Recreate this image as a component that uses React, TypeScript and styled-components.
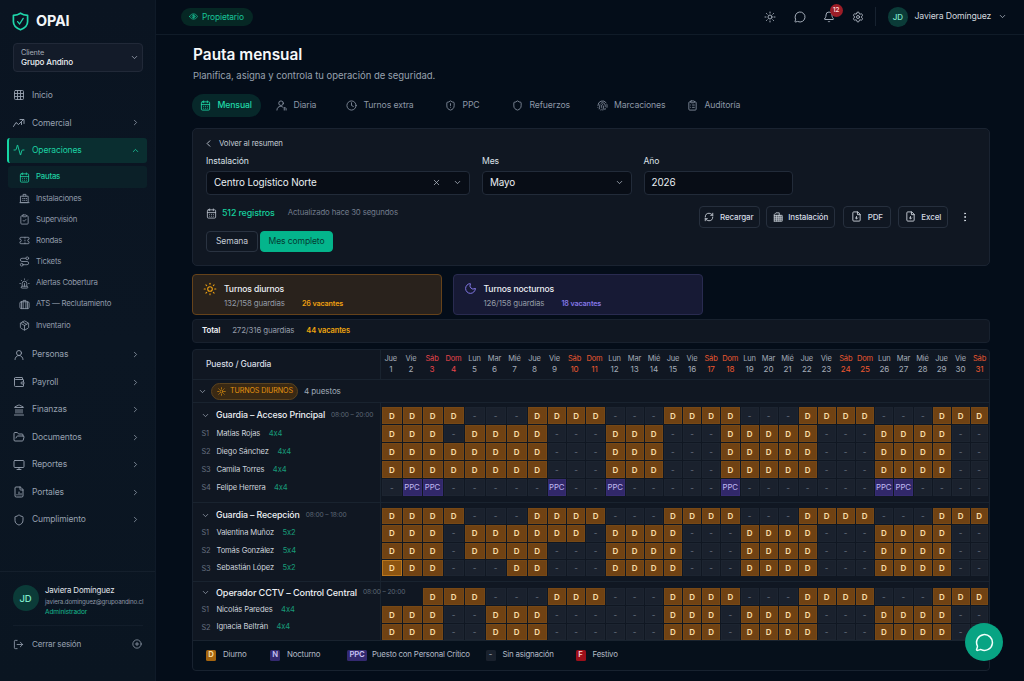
import { ReactNode } from 'react';
import styled, { createGlobalStyle, css } from 'styled-components';
import {
  Activity,
  Bell,
  CalendarDays,
  ChevronDown,
  ChevronLeft,
  ChevronRight,
  ChevronUp,
  CirclePlus,
  ClipboardCheck,
  ClipboardList,
  Clock,
  EllipsisVertical,
  FileChartColumn,
  Fingerprint,
  FolderOpen,
  Grid3x3,
  Landmark,
  LogOut,
  MessageCircle,
  Monitor,
  Moon,
  Package,
  RefreshCw,
  Route,
  Settings,
  Shield,
  ShieldAlert,
  Siren,
  Sun,
  Ticket,
  UserRound,
  Wallet,
  X,
} from 'lucide-react';

const GlobalStyle = createGlobalStyle`
  * {
    box-sizing: border-box;
  }

  body {
    margin: 0;
    background: #040d19;
    color: #e6eaf0;
    font-family: Inter, 'Liberation Sans', sans-serif;
    font-size: 9px;
    font-feature-settings: 'calt' 0;
    letter-spacing: -0.13px;
    line-height: 1;
    overflow: hidden;
  }

  svg {
    flex: none;
    display: block;
  }
`;

const Layout = styled.div`
  display: flex;
  width: 1024px;
  height: 681px;
`;

/* ---------- Sidebar ---------- */

const Sidebar = styled.aside`
  display: flex;
  flex-direction: column;
  width: 156px;
  flex: none;
  background: linear-gradient(180deg, #0a1421, #0b1623 50%, #0a1521);
  border-right: 1px solid #0f1a28;
`;

const Brand = styled.div`
  display: flex;
  align-items: center;
  gap: 7px;
  height: 43px;
  padding-left: 12px;
  color: #f2f5f8;
  font-size: 14.4px;
  font-weight: 700;
`;

const ClientSelect = styled.div`
  display: flex;
  align-items: center;
  justify-content: space-between;
  width: 130.5px;
  height: 29px;
  margin: 0 0 9.5px 12.5px;
  padding: 0 3px 0 7.5px;
  border: 1px solid #212938;
  border-radius: 4px;
  background: #131b29;
  color: #aab2c0;
`;

const ClientText = styled.div`
  display: flex;
  flex-direction: column;
  gap: 2px;
  font-size: 7.3px;
  color: #a3abb8;

  strong {
    color: #eceff3;
    font-size: 8.1px;
    font-weight: 500;
  }
`;

const NavItem = styled.div<{ $active?: boolean }>`
  display: flex;
  align-items: center;
  flex: none;
  height: 27.5px;
  padding: 0 7px 0 13px;
  margin: 0 8px 0 0;
  color: #97a1b0;
  font-size: 8.5px;

  svg:first-child {
    margin-right: 7px;
  }

  svg:nth-of-type(2) {
    margin-left: auto;
  }

  ${({ $active }) =>
    $active &&
    css`
      height: 25.5px;
      margin: 1px 8px 2px 6.5px;
      padding-left: 4.5px;
      border-left: 2px solid #16d6a4;
      border-radius: 3px;
      background: #0a2e30;
      color: #1cd3a3;
    `}
`;

const SubItem = styled.div<{ $active?: boolean }>`
  display: flex;
  align-items: center;
  gap: 6.5px;
  flex: none;
  height: 21.15px;
  margin: 0 8px 0 7.5px;
  padding-left: 11px;
  color: #8f99a8;
  font-size: 7.8px;
  letter-spacing: -0.22px;

  ${({ $active }) =>
    $active &&
    css`
      height: 22px;
      border-radius: 3px;
      background: #0b2028;
      color: #1fcfa0;
      font-weight: 500;
    `}
`;

const SubList = styled.div`
  display: flex;
  flex-direction: column;
  padding-top: 1px;
  margin-bottom: 5px;
`;

const SidebarFooter = styled.div`
  margin-top: auto;
  height: 110px;
  border-top: 1px solid #141f2c;
`;

const UserCard = styled.div`
  display: flex;
  align-items: center;
  gap: 6.5px;
  height: 53.5px;
  margin: 0 12px 0 12.5px;
  border-bottom: 1px solid #121d2a;
`;

const Avatar = styled.div<{ $size: number; $font: number }>`
  display: flex;
  align-items: center;
  justify-content: center;
  flex: none;
  width: ${({ $size }) => $size}px;
  height: ${({ $size }) => $size}px;
  border-radius: 50%;
  background: #0b3b38;
  color: #7fe9cb;
  font-size: ${({ $font }) => $font}px;
  font-weight: 500;
`;

const UserInfo = styled.div`
  display: flex;
  flex-direction: column;
  padding-top: 6px;
  white-space: nowrap;
`;

const UserName = styled.span`
  font-size: 7.9px;
  line-height: 11px;
  color: #e2e6ec;
`;

const UserEmail = styled.span`
  font-size: 6.2px;
  line-height: 11px;
  letter-spacing: -0.16px;
  color: #8d97a6;
`;

const UserRole = styled.span`
  font-size: 6.6px;
  line-height: 11px;
  color: #16b98e;
`;

const Logout = styled.div`
  display: flex;
  align-items: center;
  height: 37px;
  padding: 0 13px 0 13px;
  color: #98a2b1;
  font-size: 8.1px;
  letter-spacing: -0.2px;

  span {
    flex: 1;
    margin-left: 8px;
  }
`;

/* ---------- Main ---------- */

const Main = styled.main`
  flex: 1;
  display: flex;
  flex-direction: column;
  min-width: 0;
`;

const Topbar = styled.header`
  display: flex;
  align-items: center;
  justify-content: space-between;
  height: 34.5px;
  flex: none;
  padding: 0 17px 0 25px;
  border-bottom: 1px solid #101b28;
`;

const RolePill = styled.div`
  display: flex;
  align-items: center;
  gap: 4px;
  width: 71.5px;
  height: 18.5px;
  padding-left: 8px;
  border-radius: 10px;
  background: #062724;
  color: #18c598;
  font-size: 8.4px;
`;

const TopActions = styled.div`
  display: flex;
  align-items: center;
  color: #b3bbc7;
`;

const TopIcon = styled.div<{ $gap: number }>`
  position: relative;
  margin-right: ${({ $gap }) => $gap}px;
`;

const Badge = styled.span`
  position: absolute;
  top: -7px;
  left: 6.5px;
  display: flex;
  align-items: center;
  justify-content: center;
  width: 13px;
  height: 13px;
  border-radius: 50%;
  background: #9c1d27;
  color: #ffdcdc;
  font-size: 6.8px;
  font-weight: 500;
`;

const TopDivider = styled.span`
  width: 1px;
  height: 19px;
  margin-right: 12px;
  background: #172230;
`;

const TopName = styled.span`
  width: 76.5px;
  margin: 0 7px 0 7px;
  color: #d3d8df;
  font-size: 8.7px;
  white-space: nowrap;
`;

const Content = styled.div`
  display: flex;
  flex-direction: column;
  width: 834px;
  padding-left: 36px;
`;

const Title = styled.h1`
  margin: 10px 0 0 1px;
  font-size: 15.4px;
  line-height: 20px;
  font-weight: 600;
  letter-spacing: 0;
  color: #f6f8fa;
`;

const Subtitle = styled.p`
  margin: 4px 0 12px 1px;
  font-size: 9.5px;
  line-height: 13px;
  letter-spacing: -0.03px;
  color: #98a1ae;
`;

const Tabs = styled.nav`
  display: flex;
  height: 23px;
  margin-bottom: 11px;
`;

const Tab = styled.div<{ $width: number; $indent?: number; $active?: boolean }>`
  display: flex;
  align-items: center;
  gap: 6.5px;
  width: ${({ $width }) => $width}px;
  padding-left: ${({ $indent = 8 }) => $indent}px;
  border-radius: 12px;
  color: #8d97a6;
  font-size: 8.7px;

  ${({ $active }) =>
    $active &&
    css`
      background: #07282a;
      color: #20d9a8;
      font-weight: 500;
    `}
`;

const Panel = styled.section`
  display: flex;
  flex-direction: column;
  height: 138px;
  padding: 9px 18px 0 13px;
  border: 1px solid #1a2331;
  border-radius: 5px;
  background: #101722;
`;

const Back = styled.div`
  display: flex;
  align-items: center;
  gap: 5px;
  height: 12px;
  margin-left: -3px;
  color: #c0c7d1;
  font-size: 7.8px;
`;

const Fields = styled.div`
  display: flex;
  gap: 12px;
  margin-top: 6px;
`;

const Field = styled.div<{ $width: number }>`
  display: flex;
  flex-direction: column;
  gap: 4px;
  width: ${({ $width }) => $width}px;
`;

const Label = styled.label`
  line-height: 11px;
  font-size: 8.6px;
  letter-spacing: -0.08px;
  color: #dce1e8;
`;

const InputBox = styled.div`
  display: flex;
  align-items: center;
  gap: 12px;
  height: 24px;
  padding: 0 7px;
  border: 1px solid #222b39;
  border-radius: 4px;
  background: #080d16;
  color: #b4bcc7;

  span {
    flex: 1;
    color: #e9edf2;
    font-size: 9.9px;
  }
`;

const ActionsRow = styled.div`
  display: flex;
  align-items: flex-start;
  height: 25px;
  margin-top: 11px;
`;

const Records = styled.div`
  display: flex;
  align-items: center;
  height: 15px;
  color: #b8c0cb;
  font-size: 7.8px;

  strong {
    margin: 0 13px 0 5px;
    color: #16cf9d;
    font-size: 8.9px;
    font-weight: 500;
  }

  span {
    color: #717b8b;
  }
`;

const Actions = styled.div`
  display: flex;
  align-items: center;
  margin-left: auto;
  color: #d4dae2;
`;

const Button = styled.div<{ $width: number; $margin: number }>`
  display: flex;
  align-items: center;
  justify-content: center;
  gap: 5.5px;
  width: ${({ $width }) => $width}px;
  height: 22px;
  margin-right: ${({ $margin }) => $margin}px;
  border: 1px solid #262f3d;
  border-radius: 4px;
  color: #d4dae2;
  font-size: 8px;
  font-weight: 500;
`;

const Segments = styled.div`
  display: flex;
  gap: 2px;
`;

const Segment = styled.div<{ $width: number; $active?: boolean }>`
  display: flex;
  align-items: center;
  justify-content: center;
  width: ${({ $width }) => $width}px;
  height: 21px;
  border: 1px solid ${({ $active }) => ($active ? '#04b28a' : '#2a3341')};
  border-radius: 4px;
  background: ${({ $active }) => ($active ? '#04b58c' : 'transparent')};
  color: ${({ $active }) => ($active ? '#053b33' : '#c5ccd5')};
  font-size: 8.6px;
`;

const Shifts = styled.div`
  display: flex;
  gap: 10.5px;
  margin-top: 8.5px;
`;

const ShiftCard = styled.div<{ $tone: 'day' | 'night' }>`
  display: flex;
  gap: 7px;
  width: 250px;
  height: 40.5px;
  padding: 7px 0 0 10px;
  border: 1px solid ${({ $tone }) => ($tone === 'day' ? '#65421a' : '#292b50')};
  border-radius: 4px;
  background: ${({ $tone }) => ($tone === 'day' ? '#29221c' : '#171a35')};
  color: ${({ $tone }) => ($tone === 'day' ? '#eea011' : '#8377e6')};
`;

const ShiftInfo = styled.div`
  display: flex;
  flex-direction: column;
  gap: 3px;
  padding-top: 1.5px;
`;

const ShiftTitle = styled.span`
  color: #eceff3;
  font-size: 8.6px;
  line-height: 11px;
  font-weight: 500;
`;

const ShiftStats = styled.div`
  display: flex;
  gap: 17px;
  font-size: 7.9px;
  line-height: 11px;

  span {
    color: #939aa5;
  }

  strong {
    font-size: 7.2px;
    font-weight: 600;
  }
`;

const TotalBar = styled.div`
  display: flex;
  align-items: center;
  gap: 12px;
  height: 24px;
  margin: 4.5px 0 5.5px;
  padding-left: 9px;
  border: 1px solid #18212e;
  border-radius: 4px;
  background: #101722;
  color: #949ca9;
  font-size: 7.9px;

  b {
    color: #f0f2f5;
    font-weight: 600;
  }

  strong {
    color: #eea50f;
    font-size: 7.5px;
    font-weight: 600;
  }
`;

/* ---------- Schedule ---------- */

const Schedule = styled.section`
  display: flex;
  flex-direction: column;
  border: 1px solid #18222f;
  border-radius: 4px;
  background: #101722;
`;

const HeadRow = styled.div`
  display: flex;
  height: 30.5px;
  border-bottom: 1px solid #19232f;
`;

const HeadLabel = styled.div`
  display: flex;
  align-items: center;
  width: 188px;
  flex: none;
  padding-left: 13px;
  border-right: 1px solid #19232f;
  color: #d7dce3;
  font-size: 8.5px;
  font-weight: 500;
`;

const HeadDays = styled.div`
  display: grid;
  grid-template-columns:
    19.5px 21px 21px 22px repeat(8, 20px) 20px repeat(4, 19px) 19.5px
    repeat(3, 19px) 19.5px 19.5px 19.5px 19px 19.5px repeat(5, 19px);
`;

const HeadDay = styled.div<{ $tone: string }>`
  display: flex;
  flex-direction: column;
  align-items: center;
  padding-top: 3px;
  color: ${({ $tone }) => $tone};
  font-size: 7.5px;
  line-height: 11px;

  span:last-child {
    font-size: 8.1px;
  }
`;

const ShiftRow = styled.div`
  display: flex;
  align-items: center;
  height: 23px;
  padding-left: 5px;
  border-bottom: 1px solid #19232f;
  color: #9fa8b5;
  font-size: 8.1px;
`;

const ShiftPill = styled.div`
  display: flex;
  align-items: center;
  gap: 4px;
  width: 87px;
  height: 17px;
  margin: 0 6px 0 4px;
  padding-left: 5px;
  border: 1px solid #5a421e;
  border-radius: 9px;
  background: #3a2913;
  color: #e2920f;
  font-size: 7.2px;
  white-space: nowrap;
`;

const Post = styled.div<{ $height: number }>`
  display: flex;
  height: ${({ $height }) => $height}px;
  border-bottom: 1px solid #19232f;
`;

const Labels = styled.div<{ $top: number }>`
  display: flex;
  flex-direction: column;
  width: 188px;
  flex: none;
  padding-top: ${({ $top }) => $top}px;
  border-right: 1px solid #19232f;
`;

const PostName = styled.div<{ $height: number; $font: number }>`
  display: flex;
  align-items: center;
  flex: none;
  height: ${({ $height }) => $height}px;
  padding-left: 8px;
  color: #eef1f5;
  font-size: ${({ $font }) => $font}px;
  font-weight: 500;
  white-space: nowrap;

  svg {
    margin-right: 6px;
    color: #98a2b0;
  }

  small {
    margin-left: 6px;
    color: #5d6776;
    font-size: 6.6px;
    font-weight: 400;
  }
`;

const GuardName = styled.div<{ $height: number }>`
  display: flex;
  align-items: center;
  flex: none;
  height: ${({ $height }) => $height}px;
  padding-left: 8.5px;
  color: #ccd2da;
  font-size: 7.6px;

  i {
    width: 15px;
    color: #667080;
    font-style: normal;
    font-size: 7.4px;
  }

  em {
    margin-left: 8.5px;
    color: #189a78;
    font-style: normal;
  }
`;

const Cells = styled.div<{ $top: number; $rows: string }>`
  display: grid;
  align-content: start;
  grid-template-rows: ${({ $rows }) => $rows};
  grid-template-columns:
    20.5px 20px 21px 21px 21px 21px 21px 20px 19.5px 19px 20px 19.5px 19px 19px
    19.5px 19px 19px 19.5px 19px 19px 20px 19px 19px 19px 19px 19.5px 19.5px
    19.5px 18.5px 19px 18px;
  padding: ${({ $top }) => $top}px 0 0 1px;
`;

const Cell = styled.div<{ $kind: string }>`
  display: flex;
  align-items: center;
  justify-content: center;
  margin: 0 1px 1px 0;
  border: 1px solid #1c2430;
  background: #1a212d;
  color: #6e7785;
  font-size: 8px;

  ${({ $kind }) =>
    ($kind === 'D' || $kind === 'H') &&
    css`
      border-color: ${$kind === 'H' ? '#b8751d' : '#774815'};
      background: ${$kind === 'H' ? '#8d5511' : '#704213'};
      color: #fbdfa9;
      font-weight: 600;
    `}

  ${({ $kind }) =>
    $kind === 'P' &&
    css`
      border-color: #362c72;
      background: #31286a;
      color: #c0b8f2;
      font-size: 7.8px;
    `}

  ${({ $kind }) =>
    $kind === ' ' &&
    css`
      visibility: hidden;
    `}
`;

const Legend = styled.div`
  display: flex;
  align-items: center;
  height: 29px;
  padding-left: 13px;
  border-radius: 0 0 4px 4px;
  background: #06101b;
  color: #b3bbc6;
  font-size: 7.9px;
  letter-spacing: -0.2px;
  white-space: nowrap;
`;

const LegendItem = styled.div<{ $width: number }>`
  display: flex;
  align-items: center;
  gap: 7px;
  width: ${({ $width }) => $width}px;
`;

const Swatch = styled.span<{ $bg: string; $color: string; $wide?: boolean }>`
  display: flex;
  align-items: center;
  justify-content: center;
  width: ${({ $wide }) => ($wide ? 20 : 10)}px;
  margin-right: ${({ $wide }) => ($wide ? -2 : 0)}px;
  height: 11px;
  border-radius: 1.5px;
  background: ${({ $bg }) => $bg};
  color: ${({ $color }) => $color};
  font-size: 7.7px;
  font-weight: 600;
`;

const Fab = styled.button`
  position: fixed;
  right: 21px;
  bottom: 20px;
  display: flex;
  align-items: center;
  justify-content: center;
  width: 38px;
  height: 38px;
  padding: 0;
  border: none;
  border-radius: 50%;
  background: #08a483;
  color: #f3fffb;
`;

/* ---------- Icons ---------- */

const LogoIcon = () => (
  <svg width="17" height="19" viewBox="0 0 17 19" fill="none">
    <path
      d="M8.5 1.2C10.6 2.6 13 3.2 15.6 3.4v6.4c0 3.9-3 6.4-7.1 8-4.1-1.6-7.1-4.1-7.1-8V3.4c2.6-.2 5-.8 7.1-2.2z"
      stroke="#1fd6aa"
      strokeWidth="1.7"
      strokeLinejoin="round"
    />
    <path d="m5.6 9.6 2 2.4 3.6-5.6" stroke="#1fd6aa" strokeWidth="1.3" strokeLinecap="round" />
  </svg>
);

const Icon = ({ size = 11, children }: { size?: number; children: ReactNode }) => (
  <svg
    width={size}
    height={size}
    viewBox="0 0 24 24"
    fill="none"
    stroke="currentColor"
    strokeWidth="1.9"
    strokeLinecap="round"
    strokeLinejoin="round"
  >
    {children}
  </svg>
);

const TrendIcon = () => (
  <Icon size={12}>
    <path d="m1 19 5-8 5 4 10-10" />
    <path d="M14 5h8v8" />
    <path d="M17 15v-4" />
  </Icon>
);

const GuardIcon = () => (
  <Icon>
    <circle cx="11" cy="7" r="5" />
    <path d="M2 22c0-5 3.5-8 8-8 2 0 4 .6 5.5 2" />
    <path d="M18 22v-5M22 22v-3c0-1.5-1.5-2.5-3-2.5" />
  </Icon>
);

const EyeIcon = () => (
  <Icon size={9}>
    <path d="M1.5 12C4 7 8 5 12 5s8 2 10.5 7C20 17 16 19 12 19S4 17 1.5 12z" />
    <circle cx="12" cy="12" r="4" />
    <path d="M12 8v8" />
  </Icon>
);

const SiteIcon = () => (
  <Icon>
    <path d="M4 7h16v14H4zM9 7V3h6v4" />
    <path d="M8 12h1M12 12h1M16 12h.5M8 16h1M12 16h1M16 16h.5M2 21h20" />
  </Icon>
);

const BuildingIcon = () => (
  <Icon size={10}>
    <path d="M3 22V6l4-4h8v6M3 22h19V8H3" />
    <path d="M8 8v14M12.500 8v14M17 8v14M3 12.500h19M3 17h19" />
  </Icon>
);

const CaseIcon = () => (
  <Icon>
    <rect x="2" y="6" width="20" height="15" rx="3" />
    <path d="M9 21V3h6v18M5.500 6v15M18.500 6v15" />
  </Icon>
);

const FileIcon = () => (
  <Icon>
    <path d="M14 2H6a2 2 0 0 0-2 2v16a2 2 0 0 0 2 2h12a2 2 0 0 0 2-2V8z" />
    <path d="M14 2v6h6" />
    <path d="M12 12v4M9.500 15l2.500 2.500 2.500-2.500" />
  </Icon>
);

const nav = { size: 12, strokeWidth: 1.8 };
const sub = { size: 11, strokeWidth: 1.8 };

/* ---------- Data ---------- */

const DAY_NAMES = ['Jue', 'Vie', 'Sáb', 'Dom', 'Lun', 'Mar', 'Mié'];
const DAYS = Array.from({ length: 31 }, (_, i) => ({ name: DAY_NAMES[i % 7], number: i + 1 }));

const dayTone = (name: string, number: number) => {
  if (name !== 'Sáb' && name !== 'Dom') return '#a3abb7';
  return number < 5 ? '#e8454b' : '#ec5730';
};

// D = diurno, H = diurno seleccionado, P = PPC
const POSTS = [
  {
    name: 'Guardia – Acceso Principal',
    hours: '08:00 – 20:00',
    font: 8.8,
    height: 100,
    labelTop: 2.5,
    labelRows: [19, 18.3, 18.3, 18, 18],
    cellTop: 4,
    rows: '18px 18px 18px 18px 18px',
    guards: [
      ['S1', 'Matías Rojas', '4x4'],
      ['S2', 'Diego Sánchez', '4x4'],
      ['S3', 'Camila Torres', '4x4'],
      ['S4', 'Felipe Herrera', '4x4'],
    ],
    cells: [
      'DDDD---DDDD---DDDD---DDDD---DDD',
      'DDD-DDDD---DDD---DDDDD---DDDD--',
      'DDDDDDDD---DDD---DDDDD---DDDD--',
      'DDDDDDDD---DDD---DDDDD---DDDD--',
      '-PP-----P--P-----P-------PP----',
    ],
  },
  {
    name: 'Guardia – Recepción',
    hours: '08:00 – 18:00',
    font: 8.8,
    height: 79,
    labelTop: 3,
    labelRows: [18, 17.7, 17.7, 17.7],
    cellTop: 4.5,
    rows: '17.6px 17.6px 17.6px 17.2px',
    guards: [
      ['S1', 'Valentina Muñoz', '5x2'],
      ['S2', 'Tomás González', '5x4'],
      ['S3', 'Sebastián López', '5x2'],
    ],
    cells: [
      'DDDD---DDDD---DDDD---DDDD---DDD',
      'DDD-DDDDDD-DDDD---DDDD---DDDD--',
      'DDD-DDDD---DDDD---DDDD---DDDD--',
      'HDD---DD---DDDD---DDDD---DDDD--',
    ],
  },
  {
    name: 'Operador CCTV – Control Central',
    hours: '08:00 – 20:00',
    font: 9.15,
    height: 58.5,
    labelTop: 2.5,
    labelRows: [16.5, 17, 18.5],
    cellTop: 6,
    rows: '18px 18px 17px',
    guards: [
      ['S1', 'Nicolás Paredes', '4x4'],
      ['S2', 'Ignacia Beltrán', '4x4'],
    ],
    cells: [
      '  DDD---DDD---DDDD---DDDD---DDD',
      'DDD--DDD------DDD-DDDD---DDDD--',
      'DDD--DDD------DDD-DDDD---DDDD--',
    ],
  },
];

const cellText = (kind: string) => {
  if (kind === 'P') return 'PPC';
  if (kind === 'H') return 'D';
  return kind;
};

const SUBMENU: [ReactNode, string][] = [
  [<CalendarDays {...sub} />, 'Pautas'],
  [<SiteIcon />, 'Instalaciones'],
  [<ClipboardCheck {...sub} />, 'Supervisión'],
  [<Ticket {...sub} />, 'Rondas'],
  [<Route {...sub} />, 'Tickets'],
  [<Siren {...sub} />, 'Alertas Cobertura'],
  [<CaseIcon />, 'ATS — Reclutamiento'],
  [<Package {...sub} />, 'Inventario'],
];

const MENU_BOTTOM: [ReactNode, string][] = [
  [<UserRound {...nav} />, 'Personas'],
  [<Wallet {...nav} />, 'Payroll'],
  [<Landmark {...nav} />, 'Finanzas'],
  [<FolderOpen {...nav} />, 'Documentos'],
  [<Monitor {...nav} />, 'Reportes'],
  [<FileChartColumn {...nav} />, 'Portales'],
  [<Shield {...nav} />, 'Cumplimiento'],
];

const TABS: { icon: ReactNode; label: string; width: number; indent?: number }[] = [
  { icon: <CalendarDays {...sub} />, label: 'Mensual', width: 69 },
  { icon: <GuardIcon />, label: 'Diaria', width: 77, indent: 15 },
  { icon: <Clock {...sub} />, label: 'Turnos extra', width: 99 },
  { icon: <ShieldAlert {...sub} />, label: 'PPC', width: 67 },
  { icon: <Shield {...sub} />, label: 'Refuerzos', width: 84.5 },
  { icon: <Fingerprint {...sub} />, label: 'Marcaciones', width: 90.5 },
  { icon: <ClipboardList {...sub} />, label: 'Auditoría', width: 70 },
];

const SidebarMenu = () => (
  <Sidebar>
    <Brand>
      <LogoIcon />
      OPAI
    </Brand>
    <ClientSelect>
      <ClientText>
        Cliente
        <strong>Grupo Andino</strong>
      </ClientText>
      <ChevronDown size={9} />
    </ClientSelect>
    <NavItem>
      <Grid3x3 {...nav} />
      Inicio
    </NavItem>
    <NavItem>
      <TrendIcon />
      Comercial
      <ChevronRight size={9} />
    </NavItem>
    <NavItem $active>
      <Activity {...nav} />
      Operaciones
      <ChevronUp size={9} />
    </NavItem>
    <SubList>
      {SUBMENU.map(([icon, label], i) => (
        <SubItem key={label} $active={i === 0}>
          {icon}
          {label}
        </SubItem>
      ))}
    </SubList>
    {MENU_BOTTOM.map(([icon, label]) => (
      <NavItem key={label}>
        {icon}
        {label}
        <ChevronRight size={9} />
      </NavItem>
    ))}
    <SidebarFooter>
      <UserCard>
        <Avatar $size={26} $font={9.5}>
          JD
        </Avatar>
        <UserInfo>
          <UserName>Javiera Domínguez</UserName>
          <UserEmail>javiera.dominguez@grupoandino.cl</UserEmail>
          <UserRole>Administrador</UserRole>
        </UserInfo>
      </UserCard>
      <Logout>
        <LogOut size={11} strokeWidth={1.8} />
        <span>Cerrar sesión</span>
        <CirclePlus size={10} strokeWidth={1.8} />
      </Logout>
    </SidebarFooter>
  </Sidebar>
);

const App = () => (
  <Layout>
    <GlobalStyle />
    <SidebarMenu />
    <Main>
      <Topbar>
        <RolePill>
          <EyeIcon />
          Propietario
        </RolePill>
        <TopActions>
          <TopIcon $gap={18}>
            <Sun size={12} strokeWidth={1.8} />
          </TopIcon>
          <TopIcon $gap={17}>
            <MessageCircle size={12} strokeWidth={1.8} />
          </TopIcon>
          <TopIcon $gap={17}>
            <Bell size={12} strokeWidth={1.8} />
            <Badge>12</Badge>
          </TopIcon>
          <TopIcon $gap={11}>
            <Settings size={12} strokeWidth={1.8} />
          </TopIcon>
          <TopDivider />
          <Avatar $size={19.5} $font={8}>
            JD
          </Avatar>
          <TopName>Javiera Domínguez</TopName>
          <ChevronDown size={9} />
        </TopActions>
      </Topbar>
      <Content>
        <Title>Pauta mensual</Title>
        <Subtitle>Planifica, asigna y controla tu operación de seguridad.</Subtitle>
        <Tabs>
          {TABS.map(({ icon, label, width, indent }, i) => (
            <Tab key={label} $width={width} $indent={indent} $active={i === 0}>
              {icon}
              {label}
            </Tab>
          ))}
        </Tabs>
        <Panel>
          <Back>
            <ChevronLeft size={11} />
            Volver al resumen
          </Back>
          <Fields>
            <Field $width={264}>
              <Label>Instalación</Label>
              <InputBox>
                <span>Centro Logístico Norte</span>
                <X size={9} />
                <ChevronDown size={9} />
              </InputBox>
            </Field>
            <Field $width={149.5}>
              <Label>Mes</Label>
              <InputBox>
                <span>Mayo</span>
                <ChevronDown size={9} />
              </InputBox>
            </Field>
            <Field $width={149}>
              <Label>Año</Label>
              <InputBox>
                <span>2026</span>
              </InputBox>
            </Field>
          </Fields>
          <ActionsRow>
            <Records>
              <CalendarDays size={11} strokeWidth={1.8} />
              <strong>512 registros</strong>
              <span>Actualizado hace 30 segundos</span>
            </Records>
            <Actions>
              <Button $width={61} $margin={6.5}>
                <RefreshCw size={10} />
                Recargar
              </Button>
              <Button $width={69} $margin={8}>
                <BuildingIcon />
                Instalación
              </Button>
              <Button $width={48} $margin={7}>
                <FileIcon />
                PDF
              </Button>
              <Button $width={50} $margin={11}>
                <FileIcon />
                Excel
              </Button>
              <EllipsisVertical size={12} />
            </Actions>
          </ActionsRow>
          <Segments>
            <Segment $width={52}>Semana</Segment>
            <Segment $width={73} $active>
              Mes completo
            </Segment>
          </Segments>
        </Panel>
        <Shifts>
          <ShiftCard $tone="day">
            <Sun size={14} strokeWidth={1.8} />
            <ShiftInfo>
              <ShiftTitle>Turnos diurnos</ShiftTitle>
              <ShiftStats>
                <span>132/158 guardias</span>
                <strong>26 vacantes</strong>
              </ShiftStats>
            </ShiftInfo>
          </ShiftCard>
          <ShiftCard $tone="night">
            <Moon size={13} strokeWidth={1.8} />
            <ShiftInfo>
              <ShiftTitle>Turnos nocturnos</ShiftTitle>
              <ShiftStats>
                <span>126/158 guardias</span>
                <strong>18 vacantes</strong>
              </ShiftStats>
            </ShiftInfo>
          </ShiftCard>
        </Shifts>
        <TotalBar>
          <b>Total</b>
          <span>272/316 guardias</span>
          <strong>44 vacantes</strong>
        </TotalBar>
        <Schedule>
          <HeadRow>
            <HeadLabel>Puesto / Guardia</HeadLabel>
            <HeadDays>
              {DAYS.map(({ name, number }) => (
                <HeadDay key={number} $tone={dayTone(name, number)}>
                  <span>{name}</span>
                  <span>{number}</span>
                </HeadDay>
              ))}
            </HeadDays>
          </HeadRow>
          <ShiftRow>
            <ChevronDown size={9} />
            <ShiftPill>
              <Sun size={9} />
              TURNOS DIURNOS
            </ShiftPill>
            4 puestos
          </ShiftRow>
          {POSTS.map((post) => (
            <Post key={post.name} $height={post.height}>
              <Labels $top={post.labelTop}>
                <PostName $height={post.labelRows[0]} $font={post.font}>
                  <ChevronDown size={9} />
                  {post.name}
                  <small>{post.hours}</small>
                </PostName>
                {post.guards.map(([slot, name, pattern], i) => (
                  <GuardName key={slot} $height={post.labelRows[i + 1]}>
                    <i>{slot}</i>
                    {name}
                    <em>{pattern}</em>
                  </GuardName>
                ))}
              </Labels>
              <Cells $top={post.cellTop} $rows={post.rows}>
                {post.cells.flatMap((row, r) =>
                  row.split('').map((kind, c) => (
                    <Cell key={`${r}-${c}`} $kind={kind}>
                      {cellText(kind)}
                    </Cell>
                  ))
                )}
              </Cells>
            </Post>
          ))}
          <Legend>
            <LegendItem $width={64}>
              <Swatch $bg="#a5650f" $color="#fde3ac">D</Swatch>
              Diurno
            </LegendItem>
            <LegendItem $width={77}>
              <Swatch $bg="#33296f" $color="#c9c2f5">N</Swatch>
              Nocturno
            </LegendItem>
            <LegendItem $width={138.5}>
              <Swatch $bg="#33296f" $color="#c9c2f5" $wide>PPC</Swatch>
              Puesto con Personal Crítico
            </LegendItem>
            <LegendItem $width={90}>
              <Swatch $bg="#19212d" $color="#8d96a4">-</Swatch>
              Sin asignación
            </LegendItem>
            <LegendItem $width={70}>
              <Swatch $bg="#9c0f1a" $color="#ffd9d9">F</Swatch>
              Festivo
            </LegendItem>
          </Legend>
        </Schedule>
      </Content>
    </Main>
    <Fab>
      <MessageCircle size={19} strokeWidth={1.9} />
    </Fab>
  </Layout>
);

export default App;
